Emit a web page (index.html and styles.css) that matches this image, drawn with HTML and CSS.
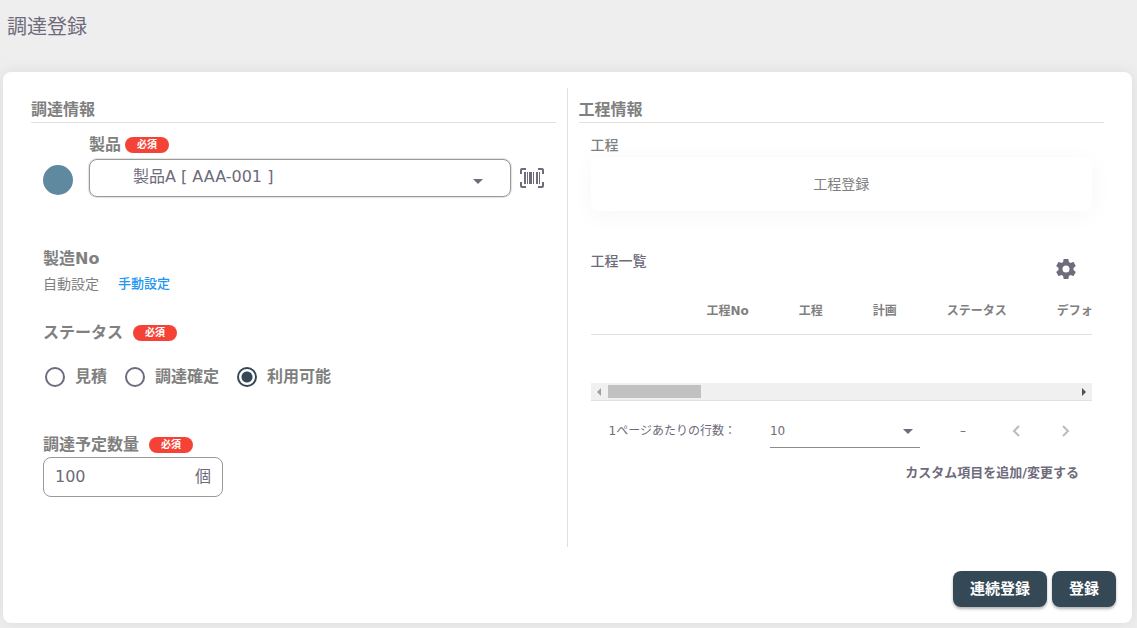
FILE: index.html
```html
<!DOCTYPE html>
<html lang="ja">
<head>
<meta charset="utf-8">
<meta name="viewport" content="width=device-width, initial-scale=1">
<title>調達登録</title>
<link rel="stylesheet" href="styles.css">
</head>
<body>
<header class="page-header"><h1 class="page-title">調達登録</h1></header>
<form class="card">
  <div class="columns">
    <section class="column column-left">
      <h2 class="section-title">調達情報</h2>
      <div class="section-body">
        <div class="product">
          <div class="label-row product-label"><label class="label" for="product">製品</label><span class="badge">必須</span></div>
          <span class="avatar"></span>
          <div class="select-box">
            <select id="product" class="product-select"><option>製品A [ AAA-001 ]</option></select>
            <svg class="caret" viewBox="0 0 10 5" aria-hidden="true"><path d="M0 0h10L5 5z"/></svg>
          </div>
          <button type="button" class="icon-button" aria-label="バーコード">
            <svg class="barcode" viewBox="0 0 24 20" aria-hidden="true">
              <path class="frame" d="M1 6V2q0-1 1-1h4M18 1h4q1 0 1 1v4M23 14v4q0 1-1 1h-4M6 19H2q-1 0-1-1v-4"/>
              <path class="bars" d="M4 4h2v12H4zM7 4h1v12H7zM9 4h3v12H9zM13 4h1v12h-1zM16 4h2v12h-2zM19 4h1v12h-1z"/>
            </svg>
          </button>
        </div>
        <div class="serial">
          <h3 class="label">製造No</h3>
          <div class="serial-row"><span>自動設定</span><a class="link" href="#manual">手動設定</a></div>
        </div>
        <fieldset class="status">
          <legend class="label-row spaced"><span class="label">ステータス</span><span class="badge">必須</span></legend>
          <div class="radios">
            <label class="radio"><input type="radio" name="status">見積</label>
            <label class="radio"><input type="radio" name="status">調達確定</label>
            <label class="radio"><input type="radio" name="status" checked>利用可能</label>
          </div>
        </fieldset>
        <div class="quantity">
          <div class="label-row spaced"><label class="label" for="quantity">調達予定数量</label><span class="badge">必須</span></div>
          <div class="input-box"><input id="quantity" type="text" value="100"><span>個</span></div>
        </div>
      </div>
    </section>
    <section class="column column-right">
      <h2 class="section-title">工程情報</h2>
      <div class="section-body">
        <h3 class="sub-title">工程</h3>
        <button type="button" class="process-button">工程登録</button>
        <div class="list-header">
          <h3 class="sub-title">工程一覧</h3>
          <button type="button" class="icon-button gear-button" aria-label="設定">
            <svg class="gear" viewBox="0 0 24 24" aria-hidden="true"><path d="M12 15.5A3.5 3.5 0 0 1 8.5 12 3.5 3.5 0 0 1 12 8.500a3.500 3.500 0 0 1 3.500 3.500 3.500 3.500 0 0 1-3.500 3.500m7.430-2.530c.04-.32.07-.64.07-.97s-.03-.66-.07-1l2.110-1.630c.19-.15.24-.42.12-.64l-2-3.460c-.12-.22-.39-.31-.61-.22l-2.490 1c-.52-.39-1.060-.73-1.690-.98l-.37-2.650A.506.506 0 0 0 14 2h-4c-.25 0-.46.18-.5.42l-.37 2.650c-.63.25-1.170.59-1.690.98l-2.490-1c-.22-.09-.49 0-.61.22l-2 3.460c-.13.22-.07.49.12.64L4.570 11c-.04.34-.07.67-.07 1s.03.65.07.97l-2.110 1.660c-.19.15-.25.42-.12.64l2 3.460c.12.22.39.3.61.22l2.490-1.010c.52.4 1.060.74 1.690.99l.37 2.650c.04.24.25.42.5.42h4c.25 0 .46-.18.5-.42l.37-2.650c.63-.26 1.170-.59 1.690-.99l2.490 1.010c.22.08.49 0 .61-.22l2-3.460c.12-.22.07-.49-.12-.64z"/></svg>
          </button>
        </div>
        <div class="table-wrap">
          <table>
            <thead><tr><td class="blank"></td><th>工程No</th><th>工程</th><th>計画</th><th>ステータス</th><th>デフォ</th></tr></thead>
          </table>
        </div>
        <div class="scrollbar">
          <svg class="arrow arrow-start" viewBox="0 0 4 8" aria-hidden="true"><path d="M4 0v8L0 4z"/></svg>
          <span class="track"><span class="thumb"></span></span>
          <svg class="arrow" viewBox="0 0 4 8" aria-hidden="true"><path d="M0 0v8l4-4z"/></svg>
        </div>
        <div class="pager">
          <label for="rows">1ページあたりの行数：</label>
          <div class="rows-box">
            <select id="rows" class="rows-select"><option>10</option></select>
            <svg class="caret" viewBox="0 0 10 5" aria-hidden="true"><path d="M0 0h10L5 5z"/></svg>
          </div>
          <span class="range">–</span>
          <button type="button" class="icon-button page-button" aria-label="前のページ" disabled><svg viewBox="0 0 8 12" aria-hidden="true"><path d="M7 1L2 6l5 5"/></svg></button>
          <button type="button" class="icon-button page-button" aria-label="次のページ" disabled><svg viewBox="0 0 8 12" aria-hidden="true"><path d="M1 1l5 5-5 5"/></svg></button>
        </div>
        <div class="custom"><button type="button" class="text-button">カスタム項目を追加/変更する</button></div>
      </div>
    </section>
  </div>
  <footer class="actions">
    <button type="button" class="primary">連続登録</button>
    <button type="submit" class="primary">登録</button>
  </footer>
</form>
</body>
</html>
```

FILE: styles.css
```css
* { box-sizing: border-box; }

body {
  margin: 0;
  background: #eee;
  color: #6e6b7b;
  font: 16px/24px "DejaVu Sans", "Noto Sans CJK JP", sans-serif;
}

h1, h2, h3 { margin: 0; font-size: 16px; }

button, input, select { font: inherit; color: inherit; }

button {
  border: 0;
  padding: 0;
  background: none;
  cursor: pointer;
}

.page-header { height: 72px; padding: 13px 7px; }

.page-title {
  font-size: 20px;
  font-weight: 400;
  line-height: 28px;
}

.card {
  margin: 0 5px 5px 3px;
  padding: 16px;
  border-radius: 8px;
  background: #fff;
  box-shadow: 0 0 16px rgba(0, 0, 0, 0.08);
}

.columns {
  display: grid;
  grid-template-columns: minmax(0, 1fr) minmax(0, 1fr);
  min-height: 459px;
  padding: 0 12px;
}

.column-left { padding-right: 11px; border-right: 1px solid #e0e0e0; }
.column-right { padding-left: 11px; }

.section-title {
  padding-top: 10px;
  border-bottom: 1px solid #e0e0e0;
  color: #808080;
}

.section-body { padding: 10px 12px 0; }

.label { color: #808080; font-weight: 700; }

.label-row {
  display: flex;
  align-items: center;
  gap: 4px;
  padding: 0;
}

.spaced { gap: 10px; }

.badge {
  width: 44px;
  height: 16px;
  border-radius: 8px;
  background: #f44336;
  color: #fff;
  font-size: 10px;
  font-weight: 700;
  line-height: 16px;
  text-align: center;
}

.product {
  display: grid;
  grid-template-columns: 30px minmax(0, 1fr) 24px;
  align-items: center;
  row-gap: 2px;
}

.product-label { grid-column: 2 / 4; margin-left: 16px; }

.avatar {
  width: 30px;
  height: 30px;
  margin-top: 4px;
  border-radius: 50%;
  background: #5f899f;
}

.select-box {
  position: relative;
  margin: 0 9px 0 16px;
}

.product-select {
  display: block;
  width: 100%;
  height: 38px;
  padding: 0 43px 2px;
  border: 1px solid #999;
  border-radius: 8px;
  background: #fff;
  box-shadow: 0 0 1px 1px rgba(0, 0, 0, 0.12);
  appearance: none;
}

.caret {
  position: absolute;
  right: 28px;
  bottom: 13px;
  width: 10px;
  height: 5px;
  fill: #6e6b7b;
  pointer-events: none;
}

.icon-button { display: grid; place-items: center; }

.barcode { width: 24px; height: 20px; }
.barcode .frame { fill: none; stroke: #6e6b7b; stroke-width: 2; }
.barcode .bars { fill: #6e6b7b; }

.serial { margin-top: 50px; color: #808080; }

.serial-row {
  display: flex;
  align-items: center;
  gap: 19px;
  margin-top: 1px;
  font-size: 14px;
}

.link {
  color: #2196f3;
  font-size: 13px;
  font-weight: 500;
  text-decoration: none;
}

.status {
  min-width: 0;
  margin: 25px 0 0;
  padding: 0;
  border: 0;
}

.radios {
  display: flex;
  gap: 18px;
  margin-top: 20px;
  padding-left: 2px;
}

.radio {
  display: flex;
  align-items: center;
  gap: 10px;
  color: #808080;
  font-weight: 700;
}

.radio input {
  width: 20px;
  height: 20px;
  margin: 0;
  border: 2px solid #6e6b7b;
  border-radius: 50%;
  appearance: none;
}

.radio input:checked {
  border-color: #344955;
  background: radial-gradient(circle, #344955 5px, transparent 6px);
}

.quantity { margin-top: 44px; }

.input-box {
  display: flex;
  align-items: center;
  width: 180px;
  height: 40px;
  padding: 0 11px;
  border: 1px solid #999;
  border-radius: 8px;
}

.input-box input {
  flex: 1;
  min-width: 0;
  padding: 0;
  border: 0;
  outline: 0;
  background: none;
}

.sub-title {
  font-size: 14px;
  font-weight: 500;
  line-height: 24px;
}

.column-right .section-body > .sub-title { color: #808080; }

.process-button {
  display: block;
  width: 100%;
  height: 54px;
  border-radius: 8px;
  background: #fff;
  box-shadow: 0 4px 24px rgba(0, 0, 0, 0.04);
  color: #808080;
  font-size: 14px;
}

.list-header {
  display: flex;
  justify-content: space-between;
  margin-top: 38px;
}

.gear-button { margin: 8px 14px 0 0; }
.gear { width: 24px; height: 24px; fill: #6e6b7b; }

.table-wrap {
  height: 102px;
  overflow: hidden;
}

table {
  width: 100%;
  border-collapse: collapse;
  font-size: 12px;
  white-space: nowrap;
}

th {
  height: 53px;
  padding: 8px 25px 0;
  border-bottom: 1px solid #e0e0e0;
  color: #808080;
}

.blank {
  min-width: 91px;
  padding: 0;
  border-bottom: 1px solid #e0e0e0;
}

.scrollbar {
  display: flex;
  align-items: center;
  gap: 7px;
  height: 18px;
  padding: 0 6px;
  border-bottom: 1px solid #e0e0e0;
  background: #f0f0f0;
}

.arrow { width: 4px; height: 8px; fill: #505050; }
.arrow-start { fill: #a0a0a0; }
.track { flex: 1; }

.thumb {
  display: block;
  width: 20%;
  height: 13px;
  background: #c1c1c1;
}

.pager {
  display: flex;
  align-items: center;
  height: 60px;
  padding: 0 14px 0 18px;
  font-size: 12px;
}

.rows-box {
  position: relative;
  width: 150px;
  margin: 0 auto 0 34px;
}

.rows-select {
  display: block;
  width: 100%;
  height: 34px;
  padding: 0;
  border: 0;
  border-bottom: 1px solid #8c8c8c;
  background: none;
  appearance: none;
}

.rows-box .caret { right: 7px; bottom: 14px; }
.range { margin-right: 38px; }

.page-button { width: 24px; height: 24px; }
.page-button + .page-button { margin-left: 26px; }

.page-button svg {
  width: 8px;
  height: 12px;
  fill: none;
  stroke: #b5bfba;
  stroke-width: 2;
}

.custom {
  display: flex;
  justify-content: flex-end;
  padding-right: 13px;
}

.text-button { font-size: 13px; font-weight: 700; }

.actions {
  display: flex;
  justify-content: flex-end;
  gap: 5px;
  margin-top: 24px;
}

.primary {
  height: 36px;
  padding: 0 17px;
  border-radius: 8px;
  background: #344955;
  box-shadow: 0 2px 3px rgba(0, 0, 0, 0.3);
  color: #fff;
  font-size: 15px;
  font-weight: 700;
}
```
